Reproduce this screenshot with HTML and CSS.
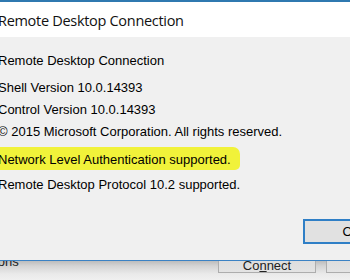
FILE: index.html
```html
<!DOCTYPE html>
<html lang="en">
<head>
  <meta charset="UTF-8" />
  <title>About Remote Desktop Connection</title>
  <link rel="stylesheet" href="styles.css">
</head>
<body>
  <div class="dialog">
    <div class="titlebar">Remote Desktop Connection</div>
    <div class="content">
      <div class="line product">Remote Desktop Connection</div>
      <div class="line">Shell Version 10.0.14393</div>
      <div class="line">Control Version 10.0.14393</div>
      <div class="line">&copy; 2015 Microsoft Corporation. All rights reserved.</div>
      <div class="line nla"><span class="marker">Network Level Authentication supported.</span></div>
      <div class="line">Remote Desktop Protocol 10.2 supported.</div>
      <div class="actions">
        <button class="btn default">OK</button>
      </div>
    </div>
  </div>
  <div class="behind">
    <span class="options">Options</span>
    <button class="btn plain">Co<u>n</u>nect</button>
    <button class="btn plain">Help</button>
  </div>
</body>
</html>
```

FILE: styles.css
```css
* {
  box-sizing: border-box;
}
html, body {
  margin: 0;
  width: 350px;
  height: 280px;
  overflow: hidden;
  background: #f0f0f0;
}
body {
  font-family: 'Liberation Sans', Arial, sans-serif;
  color: #000;
}
.dialog {
  width: 352px;
  height: 261px;
  margin-left: -2px;
  border-top: 2px solid #2f79b0;
  border-bottom: 1px solid #3b82c4;
  background: #f0f0f0;
  position: relative;
  z-index: 1;
  overflow: hidden;
}
.titlebar {
  height: 35px;
  background: #fff;
  font-family: 'Open Sans', 'Noto Sans', sans-serif;
  font-size: 14.5px;
  letter-spacing: -0.3px;
  line-height: 35px;
  padding-top: 1px;
  color: #111;
}
.content {
  padding-top: 13px;
  font-size: 13px;
}
.line {
  height: 22px;
  line-height: 22px;
}
.product {
  height: 27px;
}
.nla {
  display: flex;
  align-items: flex-start;
  margin-top: 4px;
  height: 27px;
}
.marker {
  background: #f1f23a;
  line-height: 20px;
  padding: 3px 9px 0 2px;
  margin-left: -2px;
  border-radius: 2px 7px 5px 2px;
}
.actions {
  display: flex;
  padding-left: 305px;
  margin-top: 23px;
}
.btn {
  flex-shrink: 0;
  font-family: 'Liberation Sans', Arial, sans-serif;
  font-size: 13px;
  color: #000;
  background: #e1e1e1;
  width: 98px;
  padding: 0;
}
.default {
  height: 25px;
  border: 2px solid #2f7fc6;
}
.behind {
  height: 28px;
  margin-top: -9px;
  display: flex;
  gap: 10px;
  background: linear-gradient(#bdbdbd, #bdbdbd 9px, #d4d4d4 14px, #eaeaea 22px, #f0f0f0);
  font-size: 13px;
}
.options {
  flex-shrink: 0;
  width: 234px;
  margin-left: -26px;
  padding-top: 3px;
  line-height: 14px;
  color: #222;
}
.plain {
  height: 21px;
  border: 1px solid #adadad;
  background: linear-gradient(#dadada, #e3e3e3);
  padding-top: 5px;
  color: #222;
}
```
